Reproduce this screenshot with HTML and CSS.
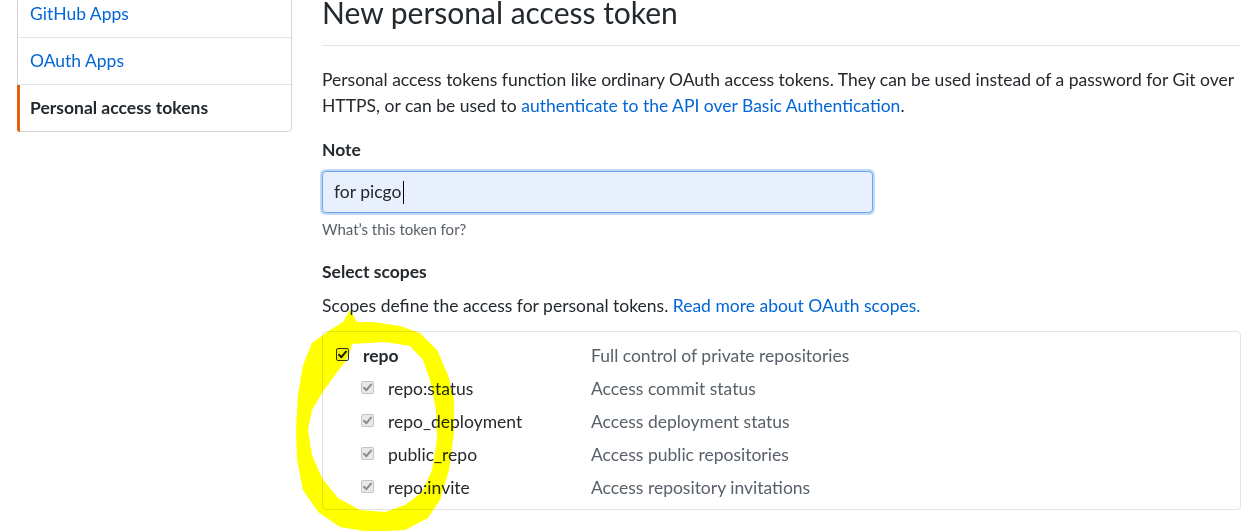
FILE: index.html
```html
<!DOCTYPE html>
<html lang="en">
<head>
<meta charset="utf-8">
<title>New personal access token</title>
<link rel="stylesheet" href="styles.css">
</head>
<body>
<div class="page">
  <nav class="menu">
    <a class="menu-item" href="#">GitHub Apps</a>
    <a class="menu-item" href="#">OAuth Apps</a>
    <a class="menu-item selected" href="#">Personal access tokens</a>
  </nav>
  <main class="main">
    <div class="subhead"><h2 class="subhead-title">New personal access token</h2></div>
    <p class="intro">Personal access tokens function like ordinary OAuth access tokens. They can be used instead of a password for Git over HTTPS, or can be used to <a href="#">authenticate to the API over Basic Authentication</a>.</p>
    <div class="form-group">
      <label class="label">Note</label>
      <div class="input">for picgo<span class="caret"></span></div>
      <p class="note">What’s this token for?</p>
    </div>
    <div class="form-group scopes-group">
      <h3 class="label">Select scopes</h3>
      <p class="scopes-intro">Scopes define the access for personal tokens. <a href="#">Read more about OAuth scopes.</a></p>
      <div class="scopes">
        <div class="scope-row">
          <div class="scope-name parent">
            <span class="cb cb-on"><svg viewBox="0 0 13 13"><path d="M3 6.8 L5.4 9.2 L10 3.6"/></svg></span>
            <span>repo</span>
          </div>
          <div class="scope-desc">Full control of private repositories</div>
        </div>
        <div class="scope-row">
          <div class="scope-name child">
            <span class="cb cb-off"><svg viewBox="0 0 13 13"><path d="M3 6.8 L5.4 9.2 L10 3.6"/></svg></span>
            <span>repo:status</span>
          </div>
          <div class="scope-desc">Access commit status</div>
        </div>
        <div class="scope-row">
          <div class="scope-name child">
            <span class="cb cb-off"><svg viewBox="0 0 13 13"><path d="M3 6.8 L5.4 9.2 L10 3.6"/></svg></span>
            <span>repo_deployment</span>
          </div>
          <div class="scope-desc">Access deployment status</div>
        </div>
        <div class="scope-row">
          <div class="scope-name child">
            <span class="cb cb-off"><svg viewBox="0 0 13 13"><path d="M3 6.8 L5.4 9.2 L10 3.6"/></svg></span>
            <span>public_repo</span>
          </div>
          <div class="scope-desc">Access public repositories</div>
        </div>
        <div class="scope-row">
          <div class="scope-name child">
            <span class="cb cb-off"><svg viewBox="0 0 13 13"><path d="M3 6.8 L5.4 9.2 L10 3.6"/></svg></span>
            <span>repo:invite</span>
          </div>
          <div class="scope-desc">Access repository invitations</div>
        </div>
      </div>
    </div>
  </main>
</div>
<svg class="highlight" width="1249" height="531" viewBox="0 0 1249 531">
  <path fill-rule="evenodd" d="M350 310 L357 322 L373 322 L400 326 L420 333 L437 350 L448 375 L454 400 L454 433 L449 470 L440 500 L428 518 L405 530 L370 532 L340 527 L318 512 L303 490 L297 460 L296 430 L298 395 L303 365 L312 343 L330 330 L343 322 Z
  M352 344 L385 342 L410 346 L423 360 L430 380 L436 410 L437 440 L432 470 L422 492 L405 505 L385 512 L360 510 L338 498 L322 478 L312 455 L308 430 L312 410 L322 393 L335 375 L345 362 L350 352 Z"/>
</svg>
</body>
</html>
```
FILE: styles.css
```css
html, body {
  margin: 0;
  padding: 0;
}
body {
  font-family: Lato, "Open Sans", "Liberation Sans", sans-serif;
  font-size: 17.5px;
  line-height: 26px;
  color: #24292e;
  background: #fff;
  overflow: hidden;
  height: 531px;
}
a {
  color: #0366d6;
  text-decoration: none;
}
.page {
  display: flex;
  align-items: flex-start;
  gap: 30px;
  padding: 0 8px 0 17px;
  margin-top: -10px;
}
.menu {
  flex: 0 0 275px;
  box-sizing: border-box;
  display: flex;
  flex-direction: column;
  border: 1px solid #d1d5da;
  border-radius: 4px;
  background: #fff;
}
.menu-item {
  position: relative;
  display: block;
  padding: 10px 12px;
  line-height: 26px;
  border-top: 1px solid #e1e4e8;
  color: #0366d6;
}
.menu-item:first-child {
  border-top: 0;
}
.menu-item.selected {
  color: #24292e;
  font-weight: 700;
}
.menu-item.selected::before {
  content: "";
  position: absolute;
  left: -1px;
  top: 0;
  bottom: -1px;
  width: 3px;
  background: #e36209;
  border-bottom-left-radius: 4px;
}
.main {
  flex: 1;
  min-width: 0;
  padding-top: 4px;
}
.subhead {
  padding-bottom: 15px;
  border-bottom: 1px solid #e1e4e8;
}
.subhead-title {
  margin: 0;
  font-size: 30px;
  line-height: 36px;
  font-weight: 400;
}
.intro {
  margin: 21px 0 18px;
}
.label {
  display: block;
  margin: 0;
  font-size: 17.5px;
  font-weight: 700;
  line-height: 26px;
}
.input {
  box-sizing: border-box;
  width: 551px;
  height: 42px;
  margin-top: 8px;
  padding: 0 11px;
  line-height: 40px;
  font-size: 17.5px;
  background: #e8f0fe;
  border: 1px solid #6aa8ee;
  border-radius: 4px;
  box-shadow: 0 0 0 2px rgba(3, 102, 214, 0.25);
  display: flex;
  align-items: center;
}
.caret {
  display: inline-block;
  width: 1px;
  height: 23px;
  background: #000;
  margin-left: 1px;
}
.note {
  margin: 5px 0 0;
  font-size: 15px;
  line-height: 22px;
  color: #586069;
}
.scopes-group {
  margin-top: 19px;
}
.scopes-intro {
  margin: 8px 0 0;
}
.scopes {
  margin-top: 12px;
  padding: 7px 0 5px 13px;
  border: 1px solid #e1e4e8;
  border-radius: 4px;
}
.scope-row {
  display: grid;
  grid-template-columns: 255px 1fr;
  align-items: center;
  height: 33px;
}
.scope-name {
  display: flex;
  align-items: center;
  gap: 14px;
}
.scope-name.parent {
  font-weight: 700;
}
.scope-name.child {
  padding-left: 25px;
}
.scope-desc {
  color: #586069;
}
.cb {
  box-sizing: border-box;
  flex: 0 0 13px;
  width: 13px;
  height: 13px;
  border-radius: 2px;
  display: inline-flex;
  margin-top: -2px;
}
.cb svg {
  width: 13px;
  height: 13px;
  margin: -1px;
}
.cb path {
  fill: none;
  stroke-width: 2;
  stroke-linecap: round;
  stroke-linejoin: round;
}
.cb-on {
  border: 1px solid #333;
  background: #f4f4f4;
}
.cb-on path {
  stroke: #222;
}
.cb-off {
  border: 1px solid #c4c4c4;
  background: #e9e9e9;
}
.cb-off path {
  stroke: #8c8c8c;
}
.highlight {
  position: absolute;
  left: 0;
  top: 0;
  pointer-events: none;
  mix-blend-mode: multiply;
}
.highlight path {
  fill: #ffff00;
}
```
